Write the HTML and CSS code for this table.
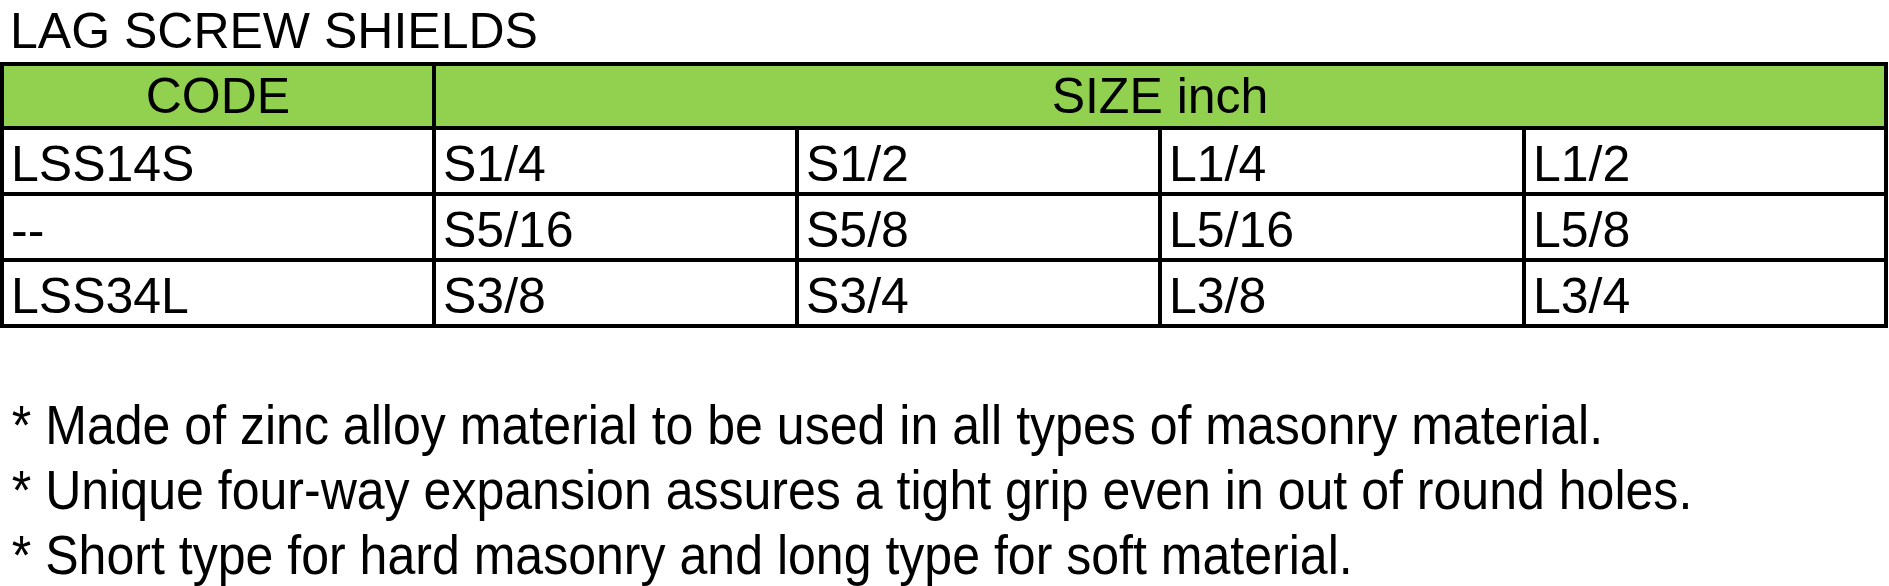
FILE: index.html
```html
<!DOCTYPE html>
<html>
<head>
<meta charset="utf-8">
<link rel="stylesheet" href="styles.css">
</head>
<body>
<h1 class="title">LAG SCREW SHIELDS</h1>
<div class="table">
  <div class="cell head">CODE</div>
  <div class="cell head span4">SIZE inch</div>
  <div class="cell">LSS14S</div>
  <div class="cell">S1/4</div>
  <div class="cell">S1/2</div>
  <div class="cell">L1/4</div>
  <div class="cell">L1/2</div>
  <div class="cell">--</div>
  <div class="cell">S5/16</div>
  <div class="cell">S5/8</div>
  <div class="cell">L5/16</div>
  <div class="cell">L5/8</div>
  <div class="cell">LSS34L</div>
  <div class="cell">S3/8</div>
  <div class="cell">S3/4</div>
  <div class="cell">L3/8</div>
  <div class="cell">L3/4</div>
</div>
<ul class="notes">
  <li>* Made of zinc alloy material to be used in all types of masonry material.</li>
  <li>* Unique four-way expansion assures a tight grip even in out of round holes.</li>
  <li>* Short type for hard masonry and long type for soft material.</li>
</ul>
</body>
</html>
```
FILE: styles.css
```css
html, body {
  margin: 0;
  padding: 0;
  background: #ffffff;
  color: #000000;
  font-family: "Liberation Sans", Arial, sans-serif;
  overflow: hidden;
}
.title {
  margin: 0 0 3px 0;
  padding: 3px 0 0 10px;
  font-size: 50px;
  font-weight: normal;
  line-height: 56px;
  white-space: nowrap;
}
.table {
  display: grid;
  grid-template-columns: 428px 359px 359px 360px 358px;
  grid-template-rows: 60px 62px 62px 62px;
  gap: 4px;
  padding: 4px;
  width: fit-content;
  background: #000000;
}
.cell {
  background: #ffffff;
  font-size: 50px;
  line-height: 62px;
  padding: 3px 0 0 7px;
  box-sizing: border-box;
  white-space: nowrap;
  overflow: hidden;
}
.head {
  background: #92d050;
  text-align: center;
  padding: 0;
  line-height: 60px;
}
.span4 {
  grid-column: span 4;
}
.notes {
  list-style: none;
  margin: 65px 0 0 0;
  padding: 0 0 0 13px;
  font-size: 55px;
  line-height: 65px;
  transform: scaleX(0.91);
  transform-origin: left center;
}
.notes li {
  white-space: nowrap;
}
```
